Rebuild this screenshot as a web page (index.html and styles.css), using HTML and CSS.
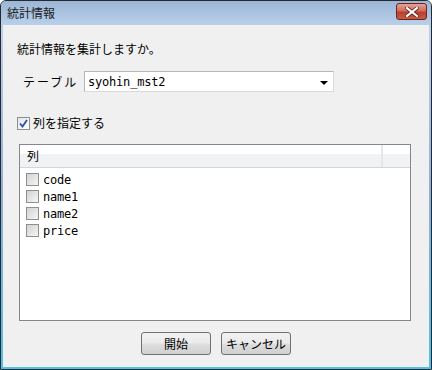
FILE: index.html
```html
<!DOCTYPE html>
<html>
<head>
    <title>統計情報</title>
    <meta charset="utf-8">
    <link rel="stylesheet" href="styles.css">
</head>
<body>
    <div class="window">
        <div class="titlebar">
            <span class="title">統計情報</span>
            <button class="close-btn">
                <svg width="14" height="10" viewBox="0 0 14 10">
                    <path d="M2 1 L12 9 M12 1 L2 9" stroke="#5a1a14" stroke-width="3.6" stroke-linecap="square"/>
                    <path d="M2 1 L12 9 M12 1 L2 9" stroke="#fff" stroke-width="2.2" stroke-linecap="square"/>
                </svg>
            </button>
        </div>
        <div class="client">
            <div class="message">統計情報を集計しますか。</div>
            <div class="table-row">
                <span class="table-label">テーブル</span>
                <div class="combo">
                    <span class="combo-text">syohin_mst2</span>
                    <span class="combo-arrow"></span>
                </div>
            </div>
            <label class="check-row">
                <span class="checkbox checked">
                    <svg width="9" height="9" viewBox="0 0 9 9">
                        <path d="M1 4.5 L3.5 7.5 L8 1" fill="none" stroke="#2a4fa8" stroke-width="1.8"/>
                    </svg>
                </span>
                <span>列を指定する</span>
            </label>
            <div class="list-box">
                <div class="list-header">
                    <div class="col-main">列</div>
                    <div class="col-rest"></div>
                </div>
                <div class="list-items">
                    <div class="list-item"><span class="checkbox"></span>code</div>
                    <div class="list-item"><span class="checkbox"></span>name1</div>
                    <div class="list-item"><span class="checkbox"></span>name2</div>
                    <div class="list-item"><span class="checkbox"></span>price</div>
                </div>
            </div>
            <div class="buttons">
                <button class="btn">開始</button>
                <button class="btn">キャンセル</button>
            </div>
        </div>
    </div>
</body>
</html>
```

FILE: styles.css
```css
body {
    margin: 0;
    padding: 0;
    font-family: "Noto Sans CJK JP", sans-serif;
    font-size: 12px;
    color: #000;
    background-color: #fff;
}
.window {
    width: 432px;
    height: 370px;
    box-sizing: border-box;
    border: 1px solid #262a30;
    border-radius: 6px 6px 0 0;
    background: linear-gradient(#9bb5d6, #bcd2ea 8%, #8fb0d6 50%, #4fc1e6 100%);
    display: flex;
    flex-direction: column;
    overflow: hidden;
}
.titlebar {
    height: 24px;
    flex-shrink: 0;
    display: flex;
    align-items: center;
    justify-content: space-between;
    padding: 0 4px 0 6px;
    background: linear-gradient(#9cb6d6, #b9d0ea);
}
.title {
    font-size: 12px;
    color: #1a1a1a;
    margin-top: -1px;
}
.close-btn {
    width: 31px;
    height: 17px;
    margin-top: -3px;
    padding: 0;
    border: 1px solid #6a2520;
    border-radius: 3px;
    background: linear-gradient(#e5a396, #cf6d5c 45%, #b8402c 55%, #c85a43);
    display: flex;
    align-items: center;
    justify-content: center;
}
.client {
    flex: 1;
    margin: 0 2px 2px 2px;
    background-color: #f0f0f0;
    padding: 17px 0 0 0;
    display: flex;
    flex-direction: column;
}
.message {
    padding-left: 14px;
    line-height: 14px;
}
.table-row {
    display: flex;
    align-items: center;
    margin-top: 15px;
    padding-left: 20px;
}
.table-label {
    width: 61px;
    letter-spacing: 2px;
}
.combo {
    width: 240px;
    height: 19px;
    border: 1px solid #b7b7b7;
    border-bottom-color: #dadada;
    border-right-color: #dadada;
    background-color: #fff;
    display: flex;
    align-items: center;
    justify-content: space-between;
    padding: 0 5px 0 3px;
}
.combo-text, .list-item {
    font-family: "DejaVu Sans Mono", "Noto Sans CJK JP", monospace;
    font-size: 12px;
    letter-spacing: -0.2px;
}
.combo-arrow {
    width: 0;
    height: 0;
    border-left: 4px solid transparent;
    border-right: 4px solid transparent;
    border-top: 4px solid #000;
    margin-top: 2px;
}
.check-row {
    display: flex;
    align-items: center;
    gap: 3px;
    margin-top: 24px;
    padding-left: 14px;
    line-height: 14px;
}
.checkbox {
    width: 11px;
    height: 11px;
    border: 1px solid #8e8f8f;
    background: linear-gradient(135deg, #d2d2d2, #f6f6f6);
    display: inline-flex;
    align-items: center;
    justify-content: center;
    flex-shrink: 0;
}
.checkbox.checked {
    background: linear-gradient(135deg, #dfe6ee, #ffffff);
}
.list-box {
    margin: 14px 0 0 16px;
    width: 390px;
    height: 175px;
    border: 1px solid #828790;
    background-color: #fff;
}
.list-header {
    display: flex;
    height: 22px;
    border-bottom: 1px solid #d5d5d5;
    background: linear-gradient(#ffffff 40%, #f1f2f4 41%, #f1f2f4);
}
.col-main {
    width: 354px;
    border-right: 2px solid #e6e7e8;
    padding-left: 7px;
    line-height: 22px;
}
.col-rest {
    flex: 1;
}
.list-items {
    padding: 3px 0 0 6px;
}
.list-item {
    display: flex;
    align-items: center;
    gap: 4px;
    height: 17px;
}
.buttons {
    display: flex;
    justify-content: center;
    gap: 10px;
    margin-top: 11px;
}
.btn {
    width: 70px;
    height: 23px;
    padding: 0;
    border: 1px solid #707070;
    border-radius: 3px;
    background: linear-gradient(#f2f2f2, #ebebeb 45%, #dddddd 55%, #cfcfcf);
    font-family: "Noto Sans CJK JP", sans-serif;
    font-size: 12px;
    color: #000;
}
```
